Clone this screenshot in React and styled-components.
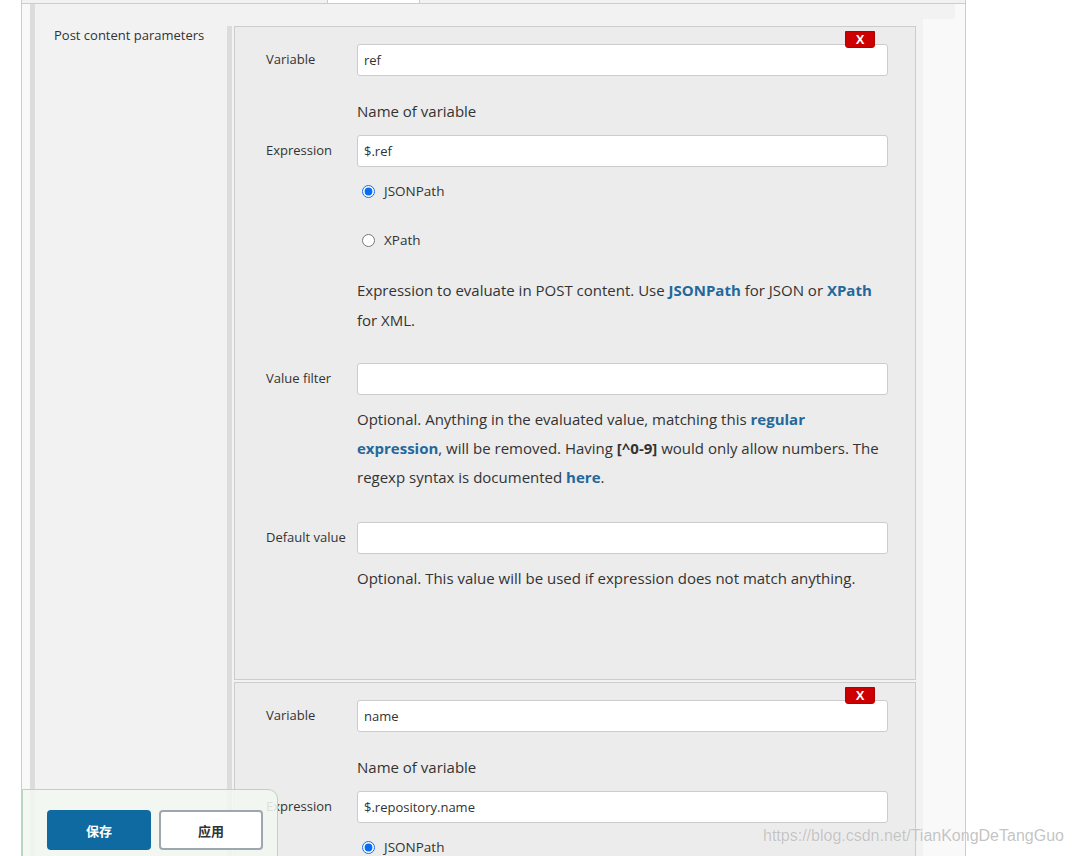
import styled, { createGlobalStyle } from "styled-components";

const GlobalStyle = createGlobalStyle`
  html, body {
    margin: 0;
    padding: 0;
    background: #fff;
  }
  body {
    height: 856px;
    overflow: hidden;
    font-family: "Open Sans", "Noto Sans", sans-serif;
    color: #333;
  }
`;

const Page = styled.div`
  position: relative;
  height: 856px;
  overflow: hidden;
`;

const Frame = styled.div`
  margin-left: 21px;
  width: 943px;
  min-height: 1400px;
  border-left: 1px solid #ccc;
  border-right: 1px solid #ccc;
  background: #f9f9f9;
`;

const TabStrip = styled.div`
  display: flex;
  height: 3px;
  border-bottom: 1px solid #ccc;
  background: #f2f2f2;
`;

const Tab = styled.div`
  width: ${(p) => p.$w}px;
  background: ${(p) => (p.$active ? "#fff" : "#f2f2f2")};
  border-left: ${(p) => (p.$active ? "1px solid #ccc" : "none")};
  border-right: ${(p) => (p.$active ? "1px solid #ccc" : "none")};
`;

const Section = styled.div`
  margin-left: 8px;
  width: 920px;
  min-height: 1400px;
  padding-top: 15px;
  border-left: 5px solid #dcdcdc;
  background: #f2f2f2;
`;

const Row = styled.div`
  display: flex;
  align-items: flex-start;
`;

const RowLabel = styled.div`
  width: 173px;
  padding: 7px 0 0 19px;
  font-size: 13px;
  line-height: 18px;
`;

const Main = styled.div`
  width: 682px;
  margin-top: 7px;
  padding-left: 2px;
  border-left: 5px solid #dcdcdc;
`;

const HelpColumn = styled.div`
  width: 32px;
  margin-left: 7px;
  min-height: 1400px;
  background: #f9f9f9;
`;

const Chunk = styled.div`
  position: relative;
  box-sizing: border-box;
  height: ${(p) => (p.$h ? `${p.$h}px` : "auto")};
  margin-bottom: 2px;
  padding: 17px 27px 0 31px;
  border: 1px solid #ccc;
  background: #ececec;
`;

const DeleteButton = styled.button`
  position: absolute;
  top: 4px;
  right: 40px;
  width: 30px;
  height: 17px;
  padding: 0;
  border: 1px solid #b30000;
  border-radius: 0 0 3px 3px;
  background: #cc0000;
  color: #fff;
  font-family: "Liberation Sans", Arial, sans-serif;
  font-size: 13px;
  font-weight: 700;
  line-height: 15px;
  cursor: pointer;
`;

const Field = styled.div`
  display: flex;
  align-items: center;
  margin-top: ${(p) => p.$mt || 0}px;
`;

const FieldLabel = styled.label`
  width: 91px;
  flex: none;
  font-size: 13px;
  line-height: 16px;
  margin-top: -2px;
`;

const TextInput = styled.input`
  flex: 1;
  box-sizing: border-box;
  height: 32px;
  padding: 0 6px;
  border: 1px solid #ccc;
  border-radius: 3px;
  background: #fff;
  color: #333;
  font-family: "Open Sans", "Noto Sans", sans-serif;
  font-size: 13px;
  outline: none;
`;

const Help = styled.div`
  margin: ${(p) => p.$mt || 0}px 0 0 91px;
  font-size: 15px;
  line-height: ${(p) => p.$lh || 29}px;
  color: #333;
`;

const Link = styled.a`
  color: #24689b;
  font-weight: 700;
  text-decoration: none;
`;

const Code = styled.b`
  color: #333;
`;

const RadioRow = styled.label`
  display: flex;
  align-items: center;
  height: 24px;
  margin: ${(p) => p.$mt}px 0 0 91px;
  font-size: 13.5px;
`;

const Radio = styled.input`
  width: 13px;
  height: 13px;
  margin: 0 9px 0 5px;
  accent-color: #0b6cf2;
`;

const SaveBar = styled.div`
  position: absolute;
  left: 22px;
  top: 789px;
  width: 256px;
  height: 90px;
  box-sizing: border-box;
  display: flex;
  gap: 8px;
  padding: 20px 0 0 24px;
  border: 1px solid #b7d5c1;
  border-top-right-radius: 10px;
  background: rgba(243, 247, 240, 0.88);
`;

const BarButton = styled.button`
  box-sizing: border-box;
  width: 104px;
  height: 40px;
  border-radius: 4px;
  border: ${(p) => (p.$primary ? "none" : "2px solid #9da7af")};
  background: ${(p) => (p.$primary ? "#0e6aa0" : "#fff")};
  color: ${(p) => (p.$primary ? "#fff" : "#333")};
  font-family: "Noto Sans CJK SC", "Noto Sans", sans-serif;
  font-size: 13px;
  font-weight: 700;
  cursor: pointer;
`;

const Watermark = styled.div`
  position: absolute;
  left: 763px;
  top: 827px;
  font-family: "Liberation Sans", Arial, sans-serif;
  font-size: 16px;
  color: rgba(185, 185, 185, 0.85);
  text-shadow: 0 0 1px #fff;
  pointer-events: none;
`;

function Parameter({ variable, expression, height }) {
  return (
    <Chunk $h={height}>
      <DeleteButton>X</DeleteButton>
      <Field>
        <FieldLabel>Variable</FieldLabel>
        <TextInput defaultValue={variable} />
      </Field>
      <Help $mt={20} $lh={30}>
        Name of variable
      </Help>
      <Field $mt={9}>
        <FieldLabel>Expression</FieldLabel>
        <TextInput defaultValue={expression} />
      </Field>
      <RadioRow $mt={12}>
        <Radio type="radio" name={variable} defaultChecked />
        JSONPath
      </RadioRow>
      <RadioRow $mt={25}>
        <Radio type="radio" name={variable} />
        XPath
      </RadioRow>
      <Help $mt={23} $lh={30}>
        Expression to evaluate in POST content. Use <Link>JSONPath</Link> for
        JSON or <Link>XPath</Link>
        <br />
        for XML.
      </Help>
      <Field $mt={28}>
        <FieldLabel>Value filter</FieldLabel>
        <TextInput />
      </Field>
      <Help $mt={10}>
        Optional. Anything in the evaluated value, matching this{" "}
        <Link>regular</Link>
        <br />
        <Link>expression</Link>, will be removed. Having <Code>[^0-9]</Code>{" "}
        would only allow numbers. The
        <br />
        regexp syntax is documented <Link>here</Link>.
      </Help>
      <Field $mt={30}>
        <FieldLabel>Default value</FieldLabel>
        <TextInput />
      </Field>
      <Help $mt={10}>
        Optional. This value will be used if expression does not match
        anything.
      </Help>
    </Chunk>
  );
}

export default function App() {
  return (
    <Page>
      <GlobalStyle />
      <Frame>
        <TabStrip>
          <Tab $w={305} />
          <Tab $w={91} $active />
        </TabStrip>
        <Section>
          <Row>
            <RowLabel>Post content parameters</RowLabel>
            <Main>
              <Parameter variable="ref" expression="$.ref" height={654} />
              <Parameter variable="name" expression="$.repository.name" />
            </Main>
            <HelpColumn />
          </Row>
        </Section>
      </Frame>
      <SaveBar>
        <BarButton $primary>保存</BarButton>
        <BarButton>应用</BarButton>
      </SaveBar>
      <Watermark>https://blog.csdn.net/TianKongDeTangGuo</Watermark>
    </Page>
  );
}
